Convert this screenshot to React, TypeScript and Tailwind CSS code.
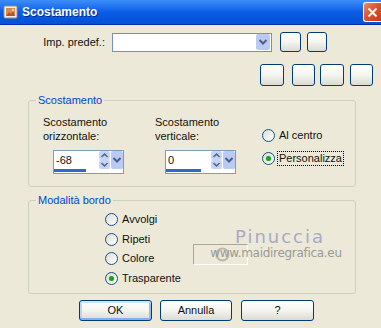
import React from "react";

function XpButton({ w, h, label, def }: { w: string; h: string; label?: string; def?: boolean }) {
  return (
    <div
      className={`${w} ${h} flex items-center justify-center rounded-[3px] border border-[#003c74] bg-gradient-to-b from-[#ffffff] via-[#f4f4f0] to-[#dcdbd2] ${
        def ? "shadow-[inset_0_-2px_0_#89adf4,inset_0_2px_0_#cee7ff,inset_2px_0_0_#bcd4f6,inset_-2px_0_0_#99baf5]" : ""
      }`}
    >
      {label}
    </div>
  );
}

function Radio({ checked, label, focus }: { checked?: boolean; label: string; focus?: boolean }) {
  return (
    <div className="flex items-center">
      <div className="flex h-[13px] w-[13px] items-center justify-center rounded-full border border-[#1c5180] bg-gradient-to-br from-[#dcdcd5] to-[#ffffff]">
        {checked && <div className="h-[5px] w-[5px] rounded-full bg-[#21a121] shadow-[0_0_1px_#6fd26f]" />}
      </div>
      <span className={`ml-[3px] px-[1px] leading-[13px] ${focus ? "outline outline-1 outline-dotted outline-black" : ""}`}>
        {label}
      </span>
    </div>
  );
}

function Spin({ value, bar }: { value: string; bar: string }) {
  return (
    <div className="flex h-[24px] w-[71px] flex-col border border-[#7f9db9] bg-white">
      <div className="flex h-[19px] items-center">
        <span className="ml-[2px] flex-1">{value}</span>
        <div className="flex h-[18px] w-[11px] flex-col">
          <div className="flex h-[9px] items-center justify-center rounded-[2px] bg-[#c6d5f7]">
            <svg width="7" height="5" viewBox="0 0 7 5">
              <path d="M0.5 4 L3.5 1 L6.5 4" fill="none" stroke="#4d6185" strokeWidth="1.5" />
            </svg>
          </div>
          <div className="flex h-[9px] items-center justify-center rounded-[2px] bg-[#c6d5f7]">
            <svg width="7" height="5" viewBox="0 0 7 5">
              <path d="M0.5 1 L3.5 4 L6.5 1" fill="none" stroke="#4d6185" strokeWidth="1.5" />
            </svg>
          </div>
        </div>
        <div className="ml-[1px] flex h-[18px] w-[12px] items-center justify-center rounded-[2px] bg-[#b9cbf3]">
          <svg width="8" height="6" viewBox="0 0 8 6">
            <path d="M0.5 1 L4 4.5 L7.5 1" fill="none" stroke="#4d6185" strokeWidth="2" />
          </svg>
        </div>
      </div>
      <div className="mt-auto mb-[1px] flex h-[3px]">
        <div className={`${bar} h-[3px] bg-[#316ac5]`} />
      </div>
    </div>
  );
}

export default function App() {
  return (
    <div className="relative h-[328px] w-[381px] overflow-hidden bg-[#ece9d8] font-['Liberation_Sans',Arial,sans-serif] text-[11px] text-[#111]">
      {/* title bar */}
      <div className="flex h-[25px] items-center bg-gradient-to-b from-[#3d8ef8] via-[#0a5ce6] to-[#0550d6] border-b border-[#0831a8]">
        <svg className="ml-[3px]" width="16" height="16" viewBox="0 0 16 16">
          <rect x="1" y="2" width="13" height="12" rx="1" fill="#f2efe6" stroke="#9c8f7e" />
          <rect x="3" y="4" width="9" height="8" fill="#d98a52" />
          <path d="M3 12 L6 8 L8 10 L10 7 L12 12 Z" fill="#b25528" />
          <circle cx="10" cy="6" r="1.2" fill="#f6dc9a" />
        </svg>
        <span className="ml-[3px] text-[12px] font-bold text-white [text-shadow:1px_1px_0_#0a2a8a]">Scostamento</span>
        <div className="ml-auto flex h-[20px] w-[18px] items-center justify-center rounded-l-[3px] border border-r-0 border-white bg-gradient-to-br from-[#e8866a] via-[#d9532c] to-[#c43a16]">
          <svg width="11" height="11" viewBox="0 0 11 11">
            <path d="M1.5 1.5 L9.5 9.5 M9.5 1.5 L1.5 9.5" stroke="white" strokeWidth="2" />
          </svg>
        </div>
      </div>

      {/* presets row */}
      <div className="mt-[7px] flex h-[20px] items-center">
        <div className="w-[105px] text-right">Imp. predef.:</div>
        <div className="ml-[7px] flex h-[19px] w-[160px] items-center border border-[#6f8fc9] bg-white">
          <div className="ml-auto mr-[1px] flex h-[16px] w-[14px] items-center justify-center rounded-[2px] bg-[#b9cbf3]">
            <svg width="8" height="6" viewBox="0 0 8 6">
              <path d="M0.5 1 L4 4.5 L7.5 1" fill="none" stroke="#4d6185" strokeWidth="2" />
            </svg>
          </div>
        </div>
        <div className="ml-[8px]">
          <XpButton w="w-[21px]" h="h-[20px]" />
        </div>
        <div className="ml-[6px]">
          <XpButton w="w-[20px]" h="h-[20px]" />
        </div>
      </div>

      <div className="mt-[12px] flex pl-[260px]">
        <XpButton w="w-[24px]" h="h-[22px]" />
        <div className="ml-[8px]">
          <XpButton w="w-[23px]" h="h-[22px]" />
        </div>
        <div className="ml-[5px]">
          <XpButton w="w-[24px]" h="h-[22px]" />
        </div>
        <div className="ml-[6px]">
          <XpButton w="w-[23px]" h="h-[22px]" />
        </div>
      </div>

      {/* Scostamento group */}
      <div className="relative ml-[28px] mt-[14px] h-[87px] w-[328px] rounded-[3px] border border-[#d0d0bf]">
        <span className="absolute -top-[7px] left-[7px] bg-[#ece9d8] px-[2px] leading-[13px] text-[#0046d5]">Scostamento</span>
        <div className="flex pl-[14px] pt-[14px]">
          <div className="w-[112px]">
            <div className="leading-[14px]">
              Scostamento
              <br />
              orizzontale:
            </div>
            <div className="ml-[10px] mt-[7px]">
              <Spin value="-68" bar="w-[32px]" />
            </div>
          </div>
          <div className="w-[107px]">
            <div className="leading-[14px]">
              Scostamento
              <br />
              verticale:
            </div>
            <div className="ml-[10px] mt-[7px]">
              <Spin value="0" bar="w-[35px]" />
            </div>
          </div>
          <div className="pt-[14px]">
            <Radio label="Al centro" />
            <div className="mt-[10px]">
              <Radio label="Personalizza" checked focus />
            </div>
          </div>
        </div>
      </div>

      {/* Modalità bordo group */}
      <div className="relative ml-[28px] mt-[13px] h-[94px] w-[328px] rounded-[3px] border border-[#d0d0bf]">
        <span className="absolute -top-[7px] left-[7px] bg-[#ece9d8] px-[2px] leading-[13px] text-[#0046d5]">Modalità bordo</span>
        <div className="flex pl-[76px] pt-[9px]">
          <div className="w-[88px]">
            {["Avvolgi", "Ripeti", "Colore", "Trasparente"].map((l) => (
              <div key={l} className="flex h-[19.5px] items-center">
                <Radio label={l} checked={l === "Trasparente"} />
              </div>
            ))}
          </div>
          <div className="mt-[34px] h-[21px] w-[55px] border border-b-white border-l-[#aca899] border-r-white border-t-[#aca899]" />
        </div>
      </div>

      {/* watermark */}
      <svg className="pointer-events-none absolute left-[215px] top-[247px]" width="15" height="15" viewBox="0 0 15 15">
        <circle cx="7.5" cy="7.5" r="6" fill="none" stroke="#a8a49a" strokeWidth="2" opacity="0.7" />
      </svg>
      <div className="pointer-events-none absolute left-[214px] top-[227px] flex w-[124px] flex-col items-center">
        <span className="ml-[8px] text-[18px] leading-[20px] tracking-[2px] text-[#a9a9c8] font-['DejaVu_Sans',sans-serif]">Pinuccia</span>
        <span className="text-[12px] leading-[12px] text-[#9a9a9a] font-['DejaVu_Sans',sans-serif] tracking-[-0.3px]">www.maidiregrafica.eu</span>
      </div>

      {/* bottom buttons */}
      <div className="mt-[6px] flex pl-[79px]">
        <XpButton w="w-[73px]" h="h-[21px]" label="OK" def />
        <div className="ml-[8px]">
          <XpButton w="w-[72px]" h="h-[21px]" label="Annulla" />
        </div>
        <div className="ml-[9px]">
          <XpButton w="w-[73px]" h="h-[21px]" label="?" />
        </div>
      </div>
    </div>
  );
}
